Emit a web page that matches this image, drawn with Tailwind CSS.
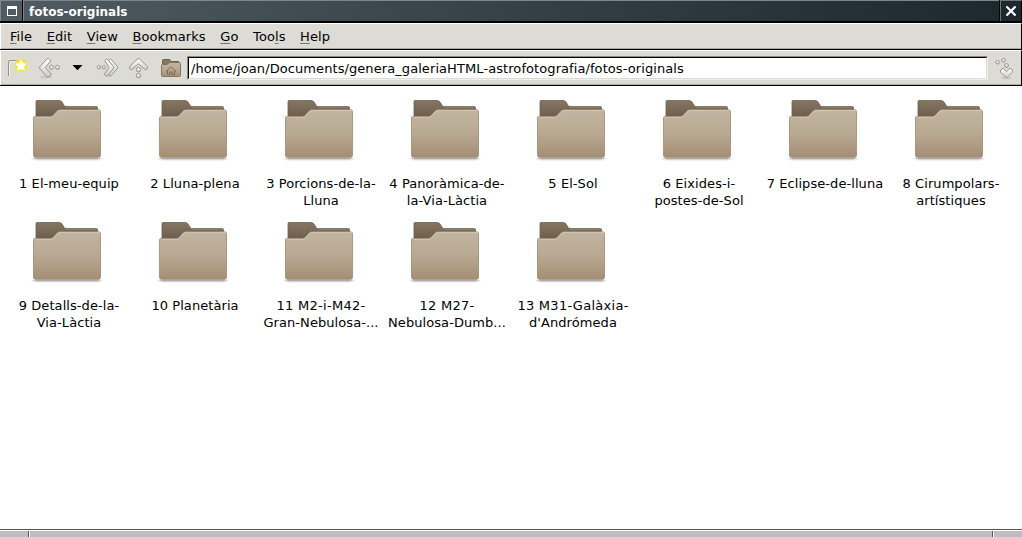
<!DOCTYPE html>
<html lang="ca">
<head>
<meta charset="utf-8">
<title>fotos-originals</title>
<script src="https://cdn.jsdelivr.net/npm/@tailwindcss/browser@4"></script>
</head>
<body class="w-[1022px] h-[537px] overflow-hidden bg-white text-black text-[13px] tracking-[0.07px] font-['DejaVu_Sans',sans-serif] flex flex-col">
<svg width="0" height="0" class="absolute">
  <defs>
    <linearGradient id="front" x1="0" y1="0" x2="0" y2="1"><stop offset="0" stop-color="#c1b5a1"/><stop offset=".5" stop-color="#b9a992"/><stop offset="1" stop-color="#a48e74"/></linearGradient>
    <linearGradient id="back" x1="0" y1="0" x2="0" y2="1"><stop offset="0" stop-color="#857661"/><stop offset="1" stop-color="#5f5241"/></linearGradient>
    <linearGradient id="silver" x1="0" y1="0" x2="0" y2="1"><stop offset="0" stop-color="#fff"/><stop offset="1" stop-color="#cccdca"/></linearGradient>
    <linearGradient id="shade"><stop offset="0" stop-color="#555" stop-opacity="0"/><stop offset=".08" stop-color="#555" stop-opacity=".5"/><stop offset=".92" stop-color="#555" stop-opacity=".5"/><stop offset="1" stop-color="#555" stop-opacity="0"/></linearGradient>
    <symbol id="folder" viewBox="0 0 72 64">
      <rect x="0" y="58.700" width="72" height="1.6" fill="url(#shade)"/>
      <rect x="1" y="60.300" width="70" height="1.2" fill="url(#shade)" opacity=".35"/>
      <path d="M5 26V2.500Q5 1.500 6 1.500H28Q30 1.500 31 3L33.500 7Q34 7.600 35 7.600H65.500Q66.500 7.600 66.500 9V26Z" fill="url(#back)" stroke="#6f614f" stroke-width=".8"/>
      <path d="M35 8.500H66" stroke="#94866f" stroke-width=".7"/>
      <path d="M2.500 19Q2.500 17.500 4 17.500H19Q21.500 17.500 23 15.500L25.500 12.500Q26.800 10.700 29 10.700H67.500Q69.500 10.700 69.500 12.700V56.500Q69.500 58.300 67.500 58.300H4.500Q2.500 58.300 2.500 56.500Z" fill="url(#front)" stroke="#9a8870" stroke-width=".8"/>
      <path d="M3.500 18.300H19.500Q22 18.300 23.500 16L26 13Q27.200 11.600 29.500 11.600H68.500" fill="none" stroke="#d3cabb" stroke-width=".9"/>
    </symbol>
  </defs>
</svg>

<header class="h-[23px] shrink-0 flex bg-linear-to-r from-[#505b62] to-[#1d272e] border-b-2 border-black text-white tracking-normal">
  <div class="w-[22px] border-t border-l border-[#7f8b90] flex items-center justify-center"><span class="w-[10px] h-[10px] border border-t-[3px] border-white"></span></div>
  <div class="w-px bg-black"></div>
  <h1 class="flex-1 border-t border-l border-[#7b878c] font-bold text-[12px] leading-[22px] pl-[5px]">fotos-originals</h1>
  <div class="w-px bg-black"></div>
  <div class="w-[22px] border-t border-l border-r border-[#6b777c] border-r-black flex items-center justify-center">
    <svg width="10" height="10" viewBox="0 0 10 10" stroke="#fff" stroke-width="2.200" stroke-linecap="square"><path d="M1.200 1.200L8.800 8.800M8.800 1.200L1.200 8.800"/></svg>
  </div>
</header>

<nav class="h-[27px] shrink-0 flex bg-[#dcdbd5] border-t border-t-white border-b border-b-black shadow-[inset_1px_0_0_#fff,inset_0_-1px_0_#aaa9a3] pl-[10px] gap-[14.6px] leading-[25px] underline-offset-2 border-r border-r-black">
  <span><u class="decoration-[#777]">F</u>ile</span><span><u class="decoration-[#777]">E</u>dit</span><span><u class="decoration-[#777]">V</u>iew</span><span><u class="decoration-[#777]">B</u>ookmarks</span><span><u class="decoration-[#777]">G</u>o</span><span>Too<u class="decoration-[#777]">l</u>s</span><span><u class="decoration-[#777]">H</u>elp</span>
</nav>

<div class="h-[36px] shrink-0 flex bg-[#dcdbd5] border-t border-t-white border-b border-b-black shadow-[inset_1px_0_0_#fff,inset_0_-1px_0_#aaa9a3] border-r border-r-black">
  <svg class="w-[187px] h-[34px] shrink-0" viewBox="0 51 187 34" fill="none">
    <path d="M8.500 76V62Q8.500 60.500 10 60.500H17" stroke="#92938f"/><path d="M9.500 76V63Q9.500 61.500 11 61.500H17" stroke="#efefec"/>
    <circle cx="21" cy="65.500" r="7.200" fill="#f6e73a" opacity=".5"/><circle cx="21" cy="65.500" r="6" fill="#f5e522"/>
    <path d="M21 60.300L22.700 63.300L26.200 64L23.900 66.600L24.300 70.200L21 68.900L17.700 70.200L18.100 66.600L15.800 64L19.300 63.300Z" fill="#fff" stroke="#fff" stroke-width=".6"/>
    <ellipse cx="46" cy="77" rx="6" ry="1.500" fill="#777" opacity=".18"/>
    <g stroke="#8b8c88" stroke-width=".9" fill="url(#silver)">
      <path d="M48.500 58.700L50.800 60.800L45.300 67.500L51.500 74.300L49.200 76.800L46.500 76.500L39.700 68.300V66.800L47 58.800Z"/>
      <circle cx="51.500" cy="67.300" r="2"/><circle cx="57.500" cy="67.300" r="2"/>
      <path d="M108.500 60.700L110.700 58.800L117.700 66.800V68L110.300 76.500L107.700 74.300L112.500 67.500Z"/>
      <path d="M104.700 60.700L107 58.800L113.800 66.800V68L107 76.500L104.200 74.300L109 67.500Z"/>
      <circle cx="99" cy="67.300" r="1.600"/><circle cx="103.800" cy="67.300" r="1.600"/>
      <path d="M137.800 58.700H139.200L147.500 66.500V68.500L145.300 69.800L138.500 63.800L131.700 69.800L129.500 68.500V66.500Z"/>
      <circle cx="138.500" cy="69.600" r="2.200"/><circle cx="138.500" cy="75.500" r="2.200"/>
    </g>
    <path d="M72.500 65H82.500L77.500 70.300Z" fill="#000"/>
    <path d="M162.500 75V60.500Q162.500 59.500 163.500 59.500H169.500L171.500 61.500H178.500V75Z" fill="#857660" stroke="#70614e"/>
    <path d="M161.500 65.500Q161.500 64.500 162.500 64.500H167L169.500 62.500H179.500Q180.500 62.500 180.500 63.500V75.500Q180.500 76.500 179.500 76.500H162.500Q161.500 76.500 161.500 75.500Z" fill="url(#front)" stroke="#85745e"/>
    <path d="M166 71.500L171 66.800L176 71.500M167.500 70.500V74.500H170V72H172V74.500H174.500V70.500" stroke="#77674f" stroke-width=".9"/>
  </svg>
  <div class="mt-[5px] w-[801px] h-[24px] bg-white border border-t-[#8c8b86] border-l-[#8c8b86] border-r-[#f0efeb] border-b-[#f0efeb]"><div class="h-full border-t border-l border-black border-r border-r-[#dcdbd5] border-b border-b-[#dcdbd5] pl-[2px] leading-[21px] tracking-[0.08px] whitespace-nowrap">/home/joan/Documents/genera_galeriaHTML-astrofotografia/fotos-originals</div></div>
  <svg class="w-[32px] h-[34px] shrink-0" viewBox="988 51 32 34" fill="none">
    <ellipse cx="1006.500" cy="78" rx="5" ry="1.200" fill="#777" opacity=".2"/>
    <g stroke="#8b8c88" stroke-width=".9" fill="url(#silver)"><circle cx="997.500" cy="62.300" r="1.800"/><circle cx="1003.500" cy="60.300" r="1.800"/><circle cx="1006.500" cy="65.500" r="1.900"/>
    <path d="M1000.500 70.200L1003 68.200L1006.500 71.500L1010 68.200L1012.500 70.200V72L1007 77.500H1006L1000.500 72Z"/></g>
  </svg>
</div>

<main class="flex-1 bg-white pl-[6px] pt-[13px] grid grid-cols-[repeat(8,126px)] auto-rows-[122px] content-start text-center leading-[17px] whitespace-nowrap">
  <figure class="flex flex-col items-center"><svg class="w-[72px] h-[64px] mr-1"><use href="#folder"/></svg><figcaption class="mt-[12px]">1 El-meu-equip</figcaption></figure>
  <figure class="flex flex-col items-center"><svg class="w-[72px] h-[64px] mr-1"><use href="#folder"/></svg><figcaption class="mt-[12px]">2 Lluna-plena</figcaption></figure>
  <figure class="flex flex-col items-center"><svg class="w-[72px] h-[64px] mr-1"><use href="#folder"/></svg><figcaption class="mt-[12px]">3 Porcions-de-la-<br>Lluna</figcaption></figure>
  <figure class="flex flex-col items-center"><svg class="w-[72px] h-[64px] mr-1"><use href="#folder"/></svg><figcaption class="mt-[12px]">4 Panoràmica-de-<br>la-Via-Làctia</figcaption></figure>
  <figure class="flex flex-col items-center"><svg class="w-[72px] h-[64px] mr-1"><use href="#folder"/></svg><figcaption class="mt-[12px]">5 El-Sol</figcaption></figure>
  <figure class="flex flex-col items-center"><svg class="w-[72px] h-[64px] mr-1"><use href="#folder"/></svg><figcaption class="mt-[12px]">6 Eixides-i-<br>postes-de-Sol</figcaption></figure>
  <figure class="flex flex-col items-center"><svg class="w-[72px] h-[64px] mr-1"><use href="#folder"/></svg><figcaption class="mt-[12px]">7 Eclipse-de-lluna</figcaption></figure>
  <figure class="flex flex-col items-center"><svg class="w-[72px] h-[64px] mr-1"><use href="#folder"/></svg><figcaption class="mt-[12px]">8 Cirumpolars-<br>artístiques</figcaption></figure>
  <figure class="flex flex-col items-center"><svg class="w-[72px] h-[64px] mr-1"><use href="#folder"/></svg><figcaption class="mt-[12px]">9 Detalls-de-la-<br>Via-Làctia</figcaption></figure>
  <figure class="flex flex-col items-center"><svg class="w-[72px] h-[64px] mr-1"><use href="#folder"/></svg><figcaption class="mt-[12px]">10 Planetària</figcaption></figure>
  <figure class="flex flex-col items-center"><svg class="w-[72px] h-[64px] mr-1"><use href="#folder"/></svg><figcaption class="mt-[12px]"><span class="tracking-[0.3px]">11 M2-i-M42-</span><br>Gran-Nebulosa-...</figcaption></figure>
  <figure class="flex flex-col items-center"><svg class="w-[72px] h-[64px] mr-1"><use href="#folder"/></svg><figcaption class="mt-[12px]"><span class="tracking-[0.3px]">12 M27-</span><br>Nebulosa-Dumb...</figcaption></figure>
  <figure class="flex flex-col items-center"><svg class="w-[72px] h-[64px] mr-1"><use href="#folder"/></svg><figcaption class="mt-[12px]"><span class="tracking-[0.27px]">13 M31-Galàxia-</span><br>d'Andrómeda</figcaption></figure>
</main>

<footer class="h-[8px] shrink-0 border-t border-[#55555a] flex flex-col">
  <div class="h-px bg-white"></div>
  <div class="flex-1 flex bg-[#c0bdc2]"><div class="w-[28px]"></div><div class="w-[2px] border-l border-l-[#55555a] bg-white"></div><div class="w-[962px]"></div><div class="w-[2px] border-l border-l-[#55555a] bg-white"></div></div>
</footer>
</body>
</html>
